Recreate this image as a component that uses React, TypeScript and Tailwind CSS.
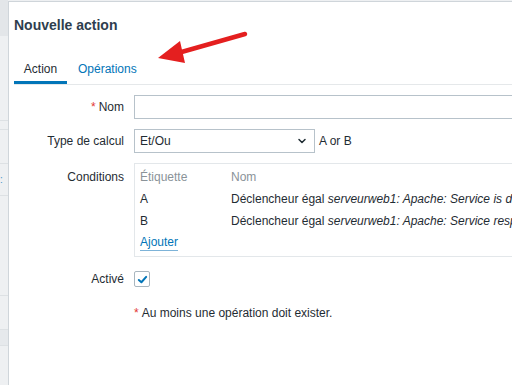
import { ChevronDown } from "lucide-react";

const FONT = { fontFamily: '"Liberation Sans", Arial, sans-serif' };

function Row({ label, required, children, top }: { label: string; required?: boolean; children: React.ReactNode; top?: boolean }) {
  return (
    <div className={`flex ${top ? "items-start" : "items-center"} gap-[10px]`}>
      <div className={`w-[110px] shrink-0 text-right ${top ? "pt-[5px]" : ""}`}>
        {required && <span className="mr-[3px] text-[#e33734]">*</span>}
        {label}
      </div>
      <div className="flex min-w-0 flex-1 items-center">{children}</div>
    </div>
  );
}

export default function App() {
  return (
    <div style={FONT} className="flex h-[385px] w-[512px] overflow-hidden bg-[#eef0f2] text-[12px] text-[#1f2c33]">
      {/* page peeking out behind the dialog */}
      <div className="flex w-[8px] shrink-0 flex-col">
        <div className="h-[36px] bg-[#e3e6e9]" />
        <div className="h-[84px]" />
        <div className="h-[10px] border-y border-[#dde1e4]" />
        <div className="h-[33px]" />
        <div className="h-[32px] border-t border-[#dde1e4] text-[10px] leading-[32px] text-[#4a95c8]">:</div>
        <div className="h-[100px] border-t border-[#dde1e4]" />
        <div className="h-[35px] border-y border-[#dde1e4]" />
        <div className="h-[16px] border-b border-[#dde1e4] bg-[#e6e9ec]" />
        <div className="flex-1" />
      </div>

      <div className="relative mt-[1px] min-w-0 flex-1 border-l border-t border-[#cfd5da] bg-white pl-[5px]">
        <div className="flex h-[45px] items-center pt-[1px] text-[14px] font-bold text-[#2e3e4e]">Nouvelle action</div>

        <div className="mt-[9px] flex h-[29px] border-b border-[#e5e8ea]">
          <div className="flex w-[53px] items-center justify-center border-b-[3px] border-[#0275b8] pt-[1px]">Action</div>
          <div className="ml-[11px] flex items-center pb-[2px] text-[#0275b8]">Opérations</div>
        </div>

        <div className="mt-[10px] flex flex-col gap-[10px]">
          <Row label="Nom" required>
            <div className="h-[24px] w-[400px] shrink-0 border border-[#b7c2ca]" />
          </Row>
          <Row label="Type de calcul">
            <div className="flex h-[24px] w-[181px] shrink-0 items-center justify-between border border-[#b7c2ca] pl-[5px] pr-[6px]">
              <span>Et/Ou</span>
              <ChevronDown size={12} strokeWidth={3} />
            </div>
            <span className="ml-[4px]">A or B</span>
          </Row>
          <Row label="Conditions" top>
            <div className="w-[400px] shrink-0 border border-[#e3e7ea] py-[2px] pl-[5px]">
              <div className="flex h-[22px] items-center text-[#8a9399]">
                <span className="w-[91px]">Étiquette</span>
                <span>Nom</span>
              </div>
              {["Service is down", "Service response time is too high"].map((t, i) => (
                <div key={t} className="flex h-[22px] items-center whitespace-nowrap">
                  <span className="w-[91px] shrink-0">{i === 0 ? "A" : "B"}</span>
                  <span>
                    Déclencheur égal <i>serveurweb1: Apache: {t}</i>
                  </span>
                </div>
              ))}
              <div className="flex h-[22px] items-center">
                <span className="border-b border-[#7db3d8] leading-[15px] text-[#0275b8]">Ajouter</span>
              </div>
            </div>
          </Row>
          <div className="mt-[3px]">
            <Row label="Activé">
              <div className="flex h-[16px] w-[16px] items-center justify-center rounded-[2px] border border-[#a9b6bf]">
                <svg viewBox="0 0 12 12" className="h-[11px] w-[11px]" fill="none" stroke="#0275b8" strokeWidth={2.2} strokeLinecap="round" strokeLinejoin="round">
                  <path d="M2 6.5 L4.8 9 L10 3.2" />
                </svg>
              </div>
            </Row>
          </div>
          <div className="ml-[120px] mt-[6px]">
            <span className="mr-[3px] text-[#e33734]">*</span>Au moins une opération doit exister.
          </div>
        </div>

        {/* red annotation arrow */}
        <svg className="pointer-events-none absolute left-[132px] top-[-3px] h-[80px] w-[120px]" viewBox="141 -1 120 80">
          <line x1="245" y1="34" x2="178" y2="53" stroke="#e41f1f" strokeWidth={4.5} strokeLinecap="round" />
          <polygon points="158,58 180,41 185,63" fill="#e41f1f" />
        </svg>
      </div>
    </div>
  );
}
